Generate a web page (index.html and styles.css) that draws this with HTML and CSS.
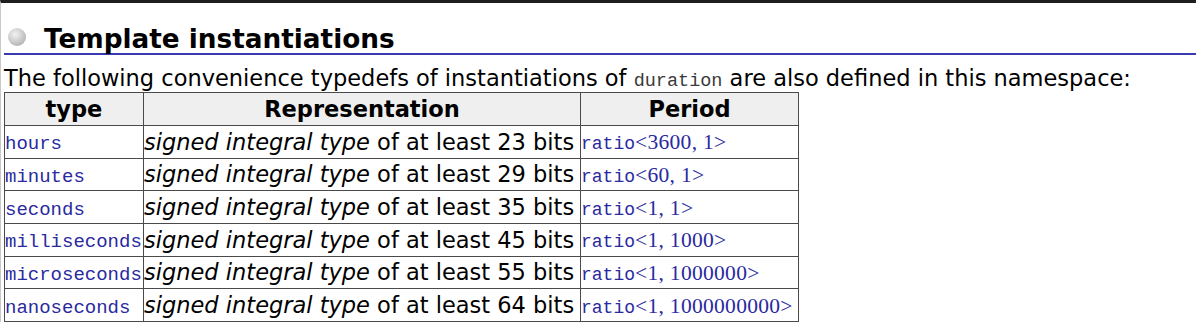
FILE: index.html
```html
<!DOCTYPE html>
<html>
<head>
<meta charset="utf-8">
<link rel="stylesheet" href="styles.css">
</head>
<body>
<div class="page">
  <h3 class="section"><span class="bullet"></span><span class="title">Template instantiations</span></h3>
  <p class="intro">The following convenience typedefs of instantiations of <code class="code">duration</code> are also defined in this namespace:</p>
  <table class="types">
    <thead>
      <tr><th class="c1">type</th><th class="c2">Representation</th><th class="c3">Period</th></tr>
    </thead>
    <tbody>
      <tr><td><a class="lnk">hours</a></td><td><i>signed integral type</i> of at least 23 bits</td><td><a class="lnk"><span class="mono">ratio</span><span class="ser">&lt;3600, 1&gt;</span></a></td></tr>
      <tr><td><a class="lnk">minutes</a></td><td><i>signed integral type</i> of at least 29 bits</td><td><a class="lnk"><span class="mono">ratio</span><span class="ser">&lt;60, 1&gt;</span></a></td></tr>
      <tr><td><a class="lnk">seconds</a></td><td><i>signed integral type</i> of at least 35 bits</td><td><a class="lnk"><span class="mono">ratio</span><span class="ser">&lt;1, 1&gt;</span></a></td></tr>
      <tr><td><a class="lnk">milliseconds</a></td><td><i>signed integral type</i> of at least 45 bits</td><td><a class="lnk"><span class="mono">ratio</span><span class="ser">&lt;1, 1000&gt;</span></a></td></tr>
      <tr><td><a class="lnk">microseconds</a></td><td><i>signed integral type</i> of at least 55 bits</td><td><a class="lnk"><span class="mono">ratio</span><span class="ser">&lt;1, 1000000&gt;</span></a></td></tr>
      <tr><td><a class="lnk">nanoseconds</a></td><td><i>signed integral type</i> of at least 64 bits</td><td><a class="lnk"><span class="mono">ratio</span><span class="ser">&lt;1, 1000000000&gt;</span></a></td></tr>
    </tbody>
  </table>
</div>
</body>
</html>
```
FILE: styles.css
```css
html, body {
  margin: 0;
  padding: 0;
  background: #fff;
}
body {
  font-family: "DejaVu Sans", Verdana, sans-serif;
  color: #000;
  height: 322px;
  overflow: hidden;
}
.page {
  border-top: 3px solid #1e1e1e;
  border-left: 1px solid #c8c8c8;
  padding-left: 3px;
  min-height: 319px;
}
.section {
  margin: 0;
  display: flex;
  align-items: flex-start;
  gap: 18px;
  height: 52px;
  box-sizing: border-box;
  border-bottom: 2px solid #3a3ab0;
  padding-left: 4px;
  padding-top: 22px;
}
.bullet {
  width: 18px;
  height: 18px;
  margin-top: 3px;
  border-radius: 50%;
  background: radial-gradient(circle at 40% 35%, #f2f2f2 0%, #c6c6c6 55%, #9c9c9c 100%);
  flex: none;
}
.title {
  font-size: 26.3px;
  font-weight: bold;
  line-height: 28px;
}
.intro {
  margin: 0;
  font-size: 22.5px;
  line-height: 26px;
  padding-top: 10px;
  height: 27px;
}
.code {
  font-family: "Liberation Mono", monospace;
  font-size: 18.5px;
  color: #3a3a3a;
}
.types {
  border-collapse: collapse;
  border: 1px solid #4a4a4a;
  font-size: 22.5px;
  table-layout: fixed;
  width: 795px;
}
.types th, .types td {
  border: 1px solid #4a4a4a;
  padding: 0;
  white-space: nowrap;
  overflow: visible;
}
.types th {
  background: #efefef;
  font-weight: bold;
  text-align: center;
  height: 32px;
}
.types td {
  height: 31.67px;
  text-align: left;
}
.c1 { width: 138px; }
.c2 { width: 436px; }
.c3 { width: 217px; }
.lnk {
  color: #2a2aa0;
  text-decoration: none;
}
td > .lnk {
  font-family: "Liberation Mono", monospace;
  font-size: 19px;
}
.mono {
  font-family: "Liberation Mono", monospace;
  font-size: 18px;
}
.ser {
  font-family: "Liberation Serif", serif;
  font-size: 21.5px;
  letter-spacing: 0.3px;
}
```
